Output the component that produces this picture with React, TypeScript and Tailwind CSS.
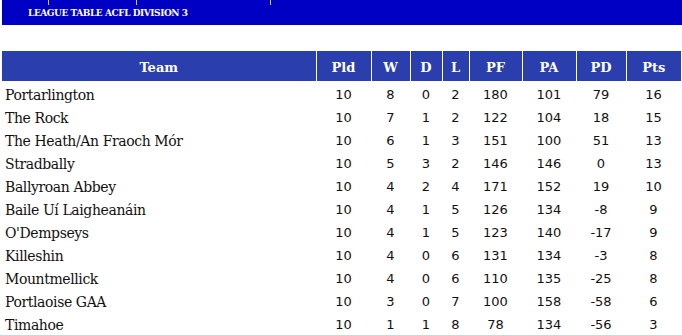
import React from "react";

const rows: [string, number, number, number, number, number, number, number, number][] = [
  ["Portarlington", 10, 8, 0, 2, 180, 101, 79, 16],
  ["The Rock", 10, 7, 1, 2, 122, 104, 18, 15],
  ["The Heath/An Fraoch Mór", 10, 6, 1, 3, 151, 100, 51, 13],
  ["Stradbally", 10, 5, 3, 2, 146, 146, 0, 13],
  ["Ballyroan Abbey", 10, 4, 2, 4, 171, 152, 19, 10],
  ["Baile Uí Laigheanáin", 10, 4, 1, 5, 126, 134, -8, 9],
  ["O'Dempseys", 10, 4, 1, 5, 123, 140, -17, 9],
  ["Killeshin", 10, 4, 0, 6, 131, 134, -3, 8],
  ["Mountmellick", 10, 4, 0, 6, 110, 135, -25, 8],
  ["Portlaoise GAA", 10, 3, 0, 7, 100, 158, -58, 6],
  ["Timahoe", 10, 1, 1, 8, 78, 134, -56, 3],
];

const heads = ["Pld", "W", "D", "L", "PF", "PA", "PD", "Pts"];
const widths = ["w-[55px]", "w-[39px]", "w-[32px]", "w-[27px]", "w-[53px]", "w-[54px]", "w-[50px]", "w-[55px]"];

export default function App() {
  return (
    <div className="w-[682px] h-[335px] bg-white overflow-hidden">
      <div className="ml-[2px] h-[25px] bg-[#0000c4] relative">
        <div className="absolute left-[46px] top-0 w-px h-[5px] bg-[#c8c8e8]" />
        <div className="absolute left-[134px] top-0 w-px h-[5px] bg-[#c8c8e8]" />
        <div className="absolute left-[268px] top-0 w-px h-[5px] bg-[#c8c8e8]" />
        <div className="pl-[26px] pt-[6px] text-white font-bold text-[9px] leading-[14px] [font-family:'DejaVu_Serif',serif] tracking-[-0.45px]">
          LEAGUE TABLE ACFL DIVISION 3
        </div>
      </div>
      <table className="ml-[2px] mt-[26px] border-collapse w-[679px]">
        <thead>
          <tr className="bg-[#2a3eae] text-white font-bold text-[13px] [font-family:'DejaVu_Serif',serif]">
            <th className="w-[314px] h-[30px] pt-[4px] pb-0 leading-[26px] border-r border-white text-center font-bold">Team</th>
            {heads.map((h, i) => (
              <th key={h} className={`${widths[i]} h-[30px] pt-[4px] pb-0 leading-[26px] ${i < 7 ? "border-r border-white" : ""} text-center font-bold`}>
                {h}
              </th>
            ))}
          </tr>
        </thead>
        <tbody>
          {rows.map((r) => (
            <tr key={r[0]}>
              <td className="pl-[3px] h-[23px] pt-[5px] pb-0 leading-[18px] text-[14px] text-[#111] [font-family:'DejaVu_Serif',serif] tracking-[-0.4px]">{r[0]}</td>
              {r.slice(1).map((v, i) => (
                <td key={i} className="h-[23px] pt-[5px] pb-0 leading-[18px] text-center text-[13px] text-[#111] [font-family:'DejaVu_Sans',sans-serif]">
                  {v}
                </td>
              ))}
            </tr>
          ))}
        </tbody>
      </table>
    </div>
  );
}
